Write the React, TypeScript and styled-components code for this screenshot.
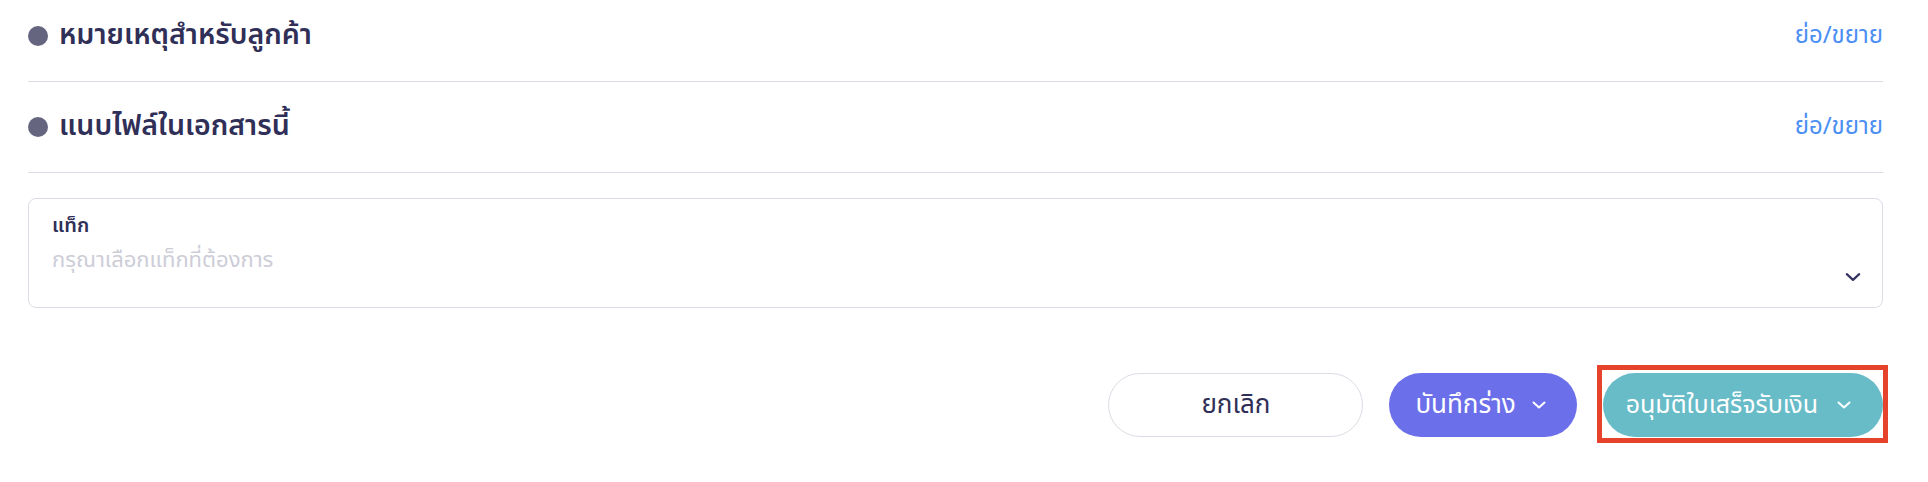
import React from "react";
import styled, { createGlobalStyle } from "styled-components";

const GlobalStyle = createGlobalStyle`
  html, body { margin: 0; padding: 0; background: #ffffff; }
  body { font-family: "Noto Sans Thai", "Noto Sans", "DejaVu Sans", sans-serif; overflow: hidden; }
  * { box-sizing: border-box; }
`;

const Page = styled.div`
  width: 1928px;
  height: 482px;
  overflow: hidden;
  padding: 0 45px 0 28px;
`;

const Sections = styled.div`
  margin-top: -9px;
`;

const SectionRow = styled.div`
  display: flex;
  align-items: center;
  justify-content: space-between;
  height: 91px;
  border-bottom: 1px solid #dcdce5;
`;

const TitleWrap = styled.div`
  display: flex;
  align-items: center;
  gap: 11px;
`;

const Dot = styled.span`
  width: 20px;
  height: 20px;
  border-radius: 50%;
  background: #66657f;
  flex: none;
`;

const Title = styled.h3`
  margin: 0;
  font-size: 28.5px;
  font-weight: 600;
  color: #302f57;
  line-height: 1;
`;

const ToggleLink = styled.a`
  font-size: 24px;
  color: #4c8ff3;
  cursor: pointer;
  line-height: 1;
`;

const TagBox = styled.div`
  margin-top: 25px;
  height: 110px;
  border: 1px solid #dcdce5;
  border-radius: 8px;
  padding: 12px 24px 0 23px;
  position: relative;
`;

const TagLabel = styled.div`
  font-size: 20px;
  font-weight: 600;
  color: #302f57;
  line-height: 30px;
`;

const Placeholder = styled.div`
  margin-top: 7px;
  font-size: 22px;
  color: #cdcdd8;
  line-height: 26px;
`;

const SelectChevron = styled.span`
  position: absolute;
  right: 20px;
  top: 69px;
  display: flex;
  color: #353460;
`;

const Actions = styled.div`
  margin-top: 65px;
  display: flex;
  justify-content: flex-end;
  align-items: center;
  gap: 26px;
`;

const Button = styled.button<{ $variant: "outline" | "purple" | "teal" }>`
  height: 64px;
  border-radius: 32px;
  font-family: inherit;
  font-size: ${(p) => (p.$variant === "teal" ? "25px" : "26px")};
  display: flex;
  align-items: center;
  justify-content: center;
  gap: ${(p) => (p.$variant === "purple" ? "15px" : "18px")};
  cursor: pointer;
  border: 1px solid
    ${(p) => (p.$variant === "outline" ? "#dcdce5" : "transparent")};
  background: ${(p) =>
    p.$variant === "outline"
      ? "#ffffff"
      : p.$variant === "purple"
      ? "#6c6fea"
      : "#67bcc8"};
  color: ${(p) => (p.$variant === "outline" ? "#302f57" : "#ffffff")};
  padding: ${(p) =>
    p.$variant === "outline"
      ? "0"
      : p.$variant === "purple"
      ? "0 29px 0 25px"
      : "0 30px 0 22px"};
  width: ${(p) => (p.$variant === "outline" ? "255px" : "auto")};
`;

const Highlight = styled.div`
  position: relative;
  display: flex;
  &::after {
    content: "";
    position: absolute;
    left: -6px;
    right: -5px;
    top: -8px;
    bottom: -6px;
    border: 5px solid #e5432b;
    pointer-events: none;
  }
`;

const Chevron = ({ size = 16 }: { size?: number }) => (
  <svg width={size} height={size} viewBox="0 0 16 16" fill="none">
    <polyline
      points="2.5,5.5 8,10.5 13.5,5.5"
      stroke="currentColor"
      strokeWidth="2"
      strokeLinecap="round"
      strokeLinejoin="round"
    />
  </svg>
);

const sections = ["หมายเหตุสำหรับลูกค้า", "แนบไฟล์ในเอกสารนี้"];

export default function App() {
  return (
    <Page>
      <GlobalStyle />
      <Sections>
        {sections.map((s) => (
          <SectionRow key={s}>
            <TitleWrap>
              <Dot />
              <Title>{s}</Title>
            </TitleWrap>
            <ToggleLink>ย่อ/ขยาย</ToggleLink>
          </SectionRow>
        ))}
      </Sections>
      <TagBox>
        <TagLabel>แท็ก</TagLabel>
        <Placeholder>กรุณาเลือกแท็กที่ต้องการ</Placeholder>
        <SelectChevron>
          <Chevron size={18} />
        </SelectChevron>
      </TagBox>
      <Actions>
        <Button $variant="outline">ยกเลิก</Button>
        <Button $variant="purple">
          บันทึกร่าง
          <Chevron />
        </Button>
        <Highlight>
          <Button $variant="teal">
            อนุมัติใบเสร็จรับเงิน
            <Chevron />
          </Button>
        </Highlight>
      </Actions>
    </Page>
  );
}
